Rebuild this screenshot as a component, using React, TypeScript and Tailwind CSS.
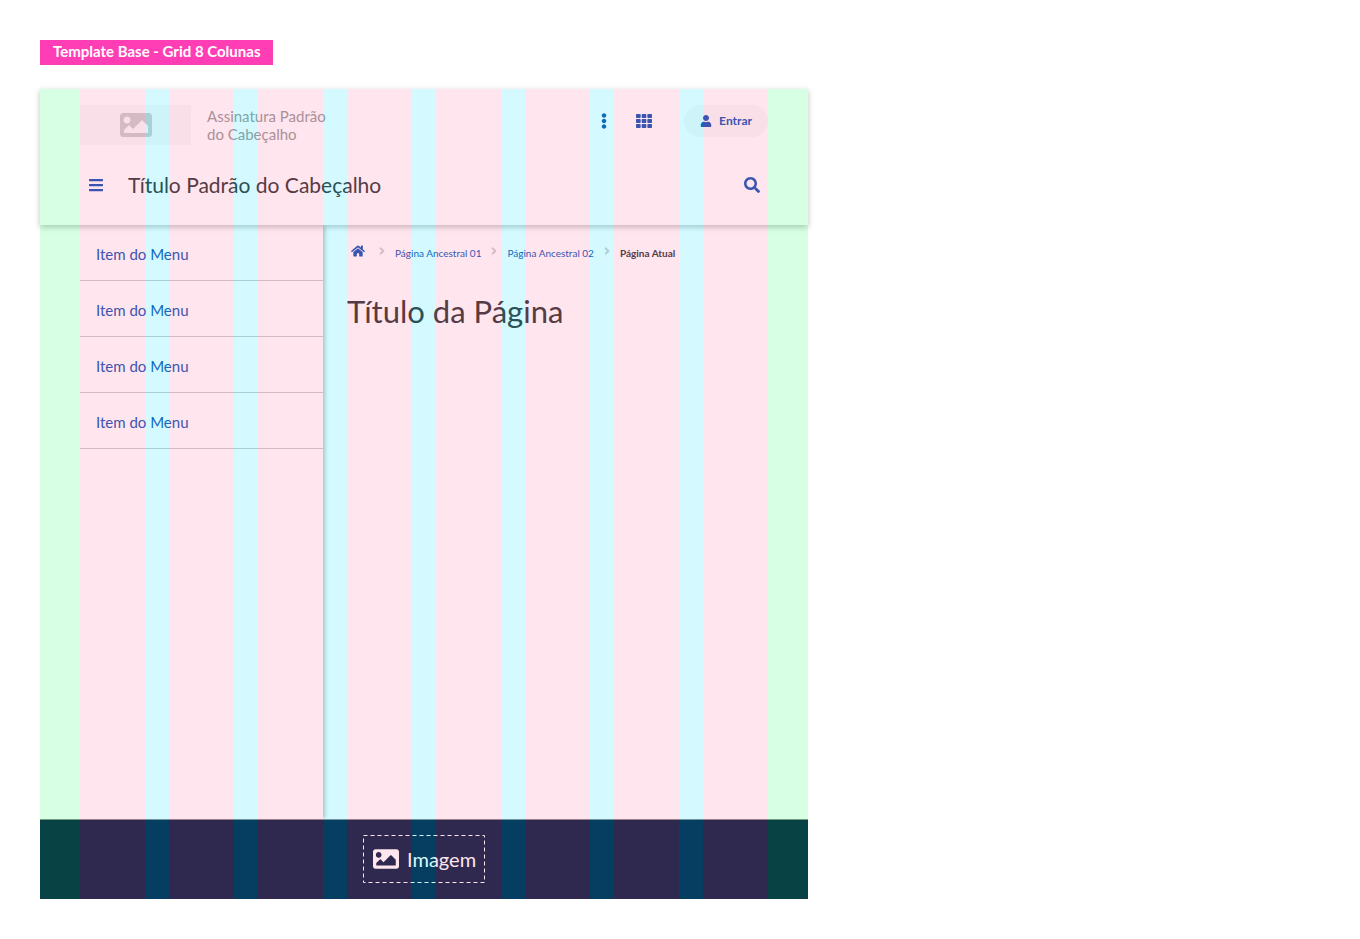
import React from "react";
import {
  FaAngleRight,
  FaBars,
  FaEllipsisV,
  FaHome,
  FaImage,
  FaSearch,
  FaTh,
  FaUser,
} from "react-icons/fa";

const menuItems = ["item-1", "item-2", "item-3", "item-4"];
const ancestors = ["Página Ancestral 01", "Página Ancestral 02"];
const columns = [1, 2, 3, 4, 5, 6, 7, 8];

function GridOverlay() {
  return (
    <div
      aria-hidden="true"
      className="pointer-events-none absolute inset-0 z-20 flex opacity-[0.165]"
    >
      <div className="w-10 bg-[#0dff5c]" />
      <div className="grid flex-1 grid-cols-8 gap-6 bg-[#00e6ff]">
        {columns.map((column) => (
          <div key={column} className="bg-[#ff6699]" />
        ))}
      </div>
      <div className="w-10 bg-[#0dff5c]" />
    </div>
  );
}

function Header() {
  return (
    <header className="relative z-10 flex flex-col gap-4 bg-white px-10 py-4 shadow-[0_2px_6px_rgba(0,0,0,0.25)]">
      <div className="flex h-10 items-start justify-between">
        <div className="flex items-center gap-4">
          <div className="flex h-10 w-[111px] items-center justify-center bg-[#f8f8f8]">
            <FaImage className="size-8 text-[#cccccc]" />
          </div>
          <p className="text-[15px] leading-[18px] text-[#999999]">
            Assinatura Padrão
            <br />
            do Cabeçalho
          </p>
        </div>
        <div className="flex items-center text-[#1351b4]">
          <button type="button" aria-label="Mais opções" className="flex size-8 items-center justify-center">
            <FaEllipsisV className="size-4" />
          </button>
          <button type="button" aria-label="Sistemas" className="ml-2 flex size-8 items-center justify-center">
            <FaTh className="size-4" />
          </button>
          <button
            type="button"
            className="ml-6 flex h-8 items-center gap-[7px] rounded-full bg-[#f8f8f8] px-4 text-[12px] font-bold"
          >
            <FaUser className="size-3" />
            Entrar
          </button>
        </div>
      </div>
      <div className="flex h-12 items-center">
        <button type="button" aria-label="Menu" className="flex size-8 items-center justify-center text-[#1351b4]">
          <FaBars className="size-4" />
        </button>
        <h2 className="ml-4 flex-1 text-[21px] leading-6 font-normal text-[#333333]">Título Padrão do Cabeçalho</h2>
        <button type="button" aria-label="Buscar" className="flex size-8 items-center justify-center text-[#1351b4]">
          <FaSearch className="size-4" />
        </button>
      </div>
    </header>
  );
}

function SideMenu() {
  return (
    <nav aria-label="Menu principal" className="w-[283px] shrink-0 pl-10 shadow-[3px_0_4px_-1px_rgba(0,0,0,0.25)]">
      <ul>
        {menuItems.map((id) => (
          <li key={id} className="border-b border-[#cccccc]">
            <a href="#menu" className="flex h-[55px] items-center px-4 pt-1 text-[15px] text-[#1351b4]">
              Item do Menu
            </a>
          </li>
        ))}
      </ul>
    </nav>
  );
}

function Breadcrumb() {
  return (
    <nav aria-label="Trilha">
      <ol className="flex h-4 items-center text-[10px] leading-3 text-[#1351b4]">
        <li className="flex items-center">
          <a href="#inicio" aria-label="Página inicial" className="px-1">
            <FaHome className="size-[14px]" />
          </a>
        </li>
        {ancestors.map((label) => (
          <li key={label} className="flex items-center">
            <FaAngleRight className="mx-[7px] size-3 text-[#cccccc]" />
            <a href="#ancestral" className="pt-[3px]">{label}</a>
          </li>
        ))}
        <li className="flex items-center font-bold text-[#333333]">
          <FaAngleRight className="mx-[7px] size-3 text-[#cccccc]" />
          <span aria-current="page" className="pt-[3px]">Página Atual</span>
        </li>
      </ol>
    </nav>
  );
}

export default function App() {
  return (
    <div className="flex min-h-screen flex-col items-start gap-6 bg-white p-10 font-['Lato',sans-serif]">
      <div className="flex h-[25px] items-center bg-[#ff3eb5] px-[13px] pb-[2px] text-[15px] font-bold text-white">
        Template Base - Grid 8 Colunas
      </div>
      <div className="relative flex w-full max-w-3xl flex-1 flex-col bg-white">
        <Header />
        <div className="flex flex-1">
          <SideMenu />
          <main className="flex-1 px-6 pt-[18px]">
            <Breadcrumb />
            <h1 className="mt-8 text-[31px] leading-10 font-normal text-[#333333]">Título da Página</h1>
          </main>
        </div>
        <footer className="relative z-10 flex justify-center border-t border-[#888888] bg-[#071d41] pt-[15px] pb-4">
          <div className="relative flex h-12 w-[122px] items-center gap-2 pr-2 pl-[10px] text-white">
            <svg aria-hidden="true" className="absolute inset-0 size-full" fill="none">
              <rect x="0.5" y="0.5" width="121" height="47" stroke="white" strokeDasharray="4 3" />
            </svg>
            <FaImage className="size-[26px] shrink-0" />
            <span className="text-[20px] leading-6">Imagem</span>
          </div>
        </footer>
        <GridOverlay />
      </div>
    </div>
  );
}
